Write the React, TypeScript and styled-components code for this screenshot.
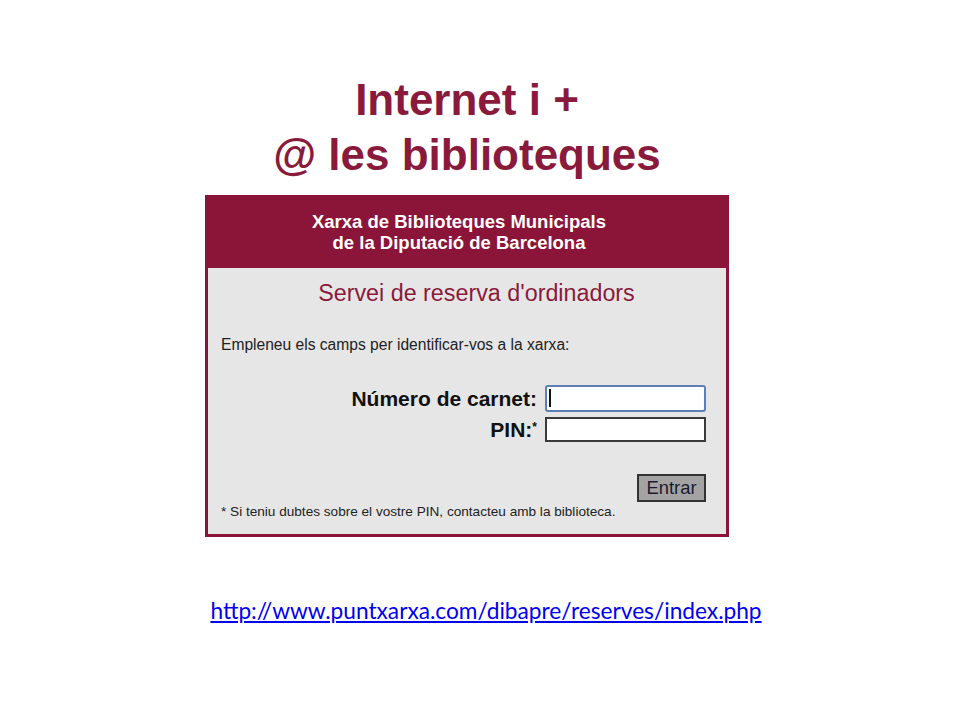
import React from 'react';
import styled, { createGlobalStyle } from 'styled-components';

const GlobalStyle = createGlobalStyle`
  html, body {
    margin: 0;
    padding: 0;
    background: #ffffff;
  }
  body {
    font-family: "Liberation Sans", Arial, sans-serif;
  }
`;

const Page = styled.main`
  width: 960px;
  height: 720px;
  box-sizing: border-box;
  padding: 72px 26px 0 0;
  display: flex;
  flex-direction: column;
  align-items: center;
`;

const Title = styled.h1`
  margin: 0;
  font-family: "Liberation Sans", Arial, sans-serif;
  font-size: 44px;
  line-height: 55px;
  font-weight: bold;
  color: #8a1a3c;
  text-align: center;
`;

const Panel = styled.section`
  margin-top: 13px;
  width: 524px;
  box-sizing: border-box;
  background: #8a1538;
  padding: 0 3px 3px 3px;
`;

const Header = styled.header`
  height: 73px;
  box-sizing: border-box;
  padding: 16px 16px 0 0;
  color: #ffffff;
  font-size: 18.5px;
  line-height: 21px;
  font-weight: bold;
  text-align: center;
`;

const Body = styled.div`
  background: #e6e6e6;
  padding: 12px 20px 14px 13px;
  color: #222222;
`;

const Subtitle = styled.h2`
  margin: 0 0 0 26px;
  font-size: 23.3px;
  line-height: 27px;
  font-weight: normal;
  color: #8a1a3c;
  text-align: center;
`;

const Intro = styled.p`
  margin: 29px 0 0 0;
  font-size: 15.6px;
  line-height: 18px;
`;

const Form = styled.form`
  margin-top: 31px;
  display: grid;
  grid-template-columns: auto 161px;
  justify-content: end;
  column-gap: 8px;
  row-gap: 5px;
  align-items: center;
`;

const Label = styled.label`
  font-size: 21px;
  font-weight: bold;
  line-height: 24px;
  text-align: right;
  color: #111111;

  sup {
    font-size: 12px;
    vertical-align: 6px;
    line-height: 0;
  }
`;

const Input = styled.input<{ $focused?: boolean }>`
  width: 161px;
  height: ${({ $focused }) => ($focused ? '27px' : '25px')};
  box-sizing: border-box;
  margin: 0;
  padding: 0 3px;
  background: #ffffff;
  font-family: "Liberation Sans", Arial, sans-serif;
  font-size: 14px;
  border: 2px solid ${({ $focused }) => ($focused ? '#5c7fb6' : '#3a3a3a')};
  border-radius: ${({ $focused }) => ($focused ? '3px' : '0')};
  outline: none;
`;

const Caret = styled.span`
  position: absolute;
  left: 4px;
  top: 4px;
  width: 2px;
  height: 18px;
  background: #111111;
`;

const InputWrap = styled.div`
  position: relative;
  display: flex;
`;

const Actions = styled.div`
  margin-top: 32px;
  display: flex;
  justify-content: flex-end;
`;

const Button = styled.button`
  width: 69px;
  height: 28px;
  box-sizing: border-box;
  padding: 0;
  background: #a3a3a3;
  border: 2px solid #333333;
  font-family: "Liberation Sans", Arial, sans-serif;
  font-size: 18.4px;
  color: #1a1a2e;
`;

const Note = styled.p`
  margin: 2px 0 0 0;
  font-size: 13.6px;
  line-height: 16px;
  color: #222222;
`;

const Link = styled.a`
  margin-top: 60px;
  margin-left: 38px;
  font-family: Lato, "Liberation Sans", sans-serif;
  font-size: 22.7px;
  color: #0000ee;
  text-decoration: underline;
`;

const App: React.FC = () => {
  return (
    <>
      <GlobalStyle />
      <Page>
        <Title>
          Internet i +
          <br />@ les biblioteques
        </Title>
        <Panel>
          <Header>
            Xarxa de Biblioteques Municipals
            <br />
            de la Diputació de Barcelona
          </Header>
          <Body>
            <Subtitle>Servei de reserva d'ordinadors</Subtitle>
            <Intro>Empleneu els camps per identificar-vos a la xarxa:</Intro>
            <Form onSubmit={(e) => e.preventDefault()}>
              <Label htmlFor="carnet">Número de carnet:</Label>
              <InputWrap>
                <Input id="carnet" $focused />
                <Caret />
              </InputWrap>
              <Label htmlFor="pin">
                PIN:<sup>*</sup>
              </Label>
              <InputWrap>
                <Input id="pin" type="password" />
              </InputWrap>
            </Form>
            <Actions>
              <Button type="button">Entrar</Button>
            </Actions>
            <Note>* Si teniu dubtes sobre el vostre PIN, contacteu amb la biblioteca.</Note>
          </Body>
        </Panel>
        <Link href="#">http://www.puntxarxa.com/dibapre/reserves/index.php</Link>
      </Page>
    </>
  );
};

export default App;
